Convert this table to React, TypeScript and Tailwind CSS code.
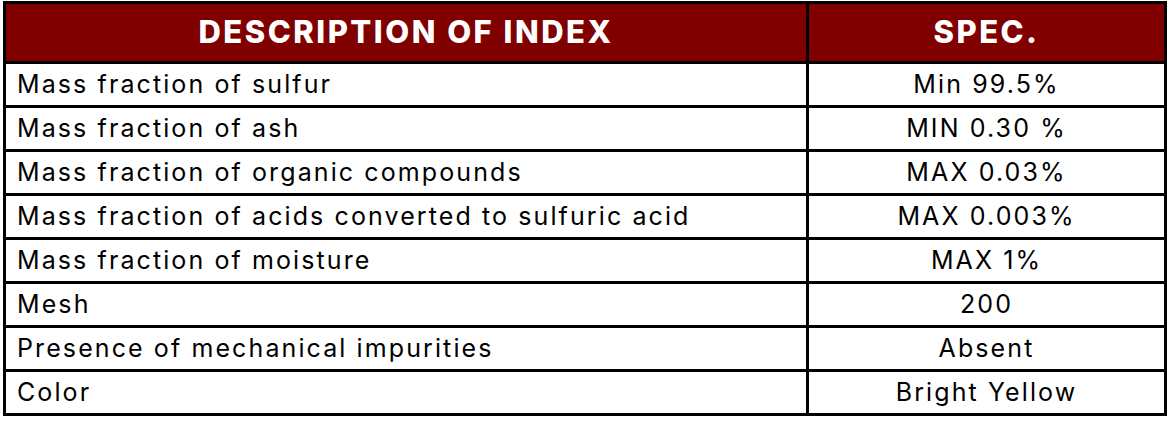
import React from 'react';

const rows: [string, string][] = [
  ['Mass fraction of sulfur', 'Min 99.5%'],
  ['Mass fraction of ash', 'MIN 0.30 %'],
  ['Mass fraction of organic compounds', 'MAX 0.03%'],
  ['Mass fraction of acids converted to sulfuric acid', 'MAX 0.003%'],
  ['Mass fraction of moisture', 'MAX 1%'],
  ['Mesh', '200'],
  ['Presence of mechanical impurities', 'Absent'],
  ['Color', 'Bright Yellow'],
];

export default function App() {
  return (
    <div className="w-[1171px] h-[421px] bg-white pt-px pl-[3px]">
      <table
        className="w-[1164px] border-collapse border-[3px] border-black text-black"
        style={{ fontFamily: 'Inter, "Noto Sans", sans-serif' }}
      >
        <thead>
          <tr className="h-[60px] bg-[#800000] text-white">
            <th className="w-[803px] border-[3px] border-black text-[31px] font-extrabold tracking-[2.5px]">
              DESCRIPTION OF INDEX
            </th>
            <th className="border-[3px] border-black text-[31px] font-extrabold tracking-[2.5px]">
              SPEC.
            </th>
          </tr>
        </thead>
        <tbody>
          {rows.map(([name, spec]) => (
            <tr key={name} className="h-[44px]">
              <td className="border-[3px] border-black pl-[11px] text-[25px] leading-none tracking-[2.1px]">{name}</td>
              <td className="border-[3px] border-black text-center text-[25px] leading-none tracking-[2.1px]">{spec}</td>
            </tr>
          ))}
        </tbody>
      </table>
    </div>
  );
}
